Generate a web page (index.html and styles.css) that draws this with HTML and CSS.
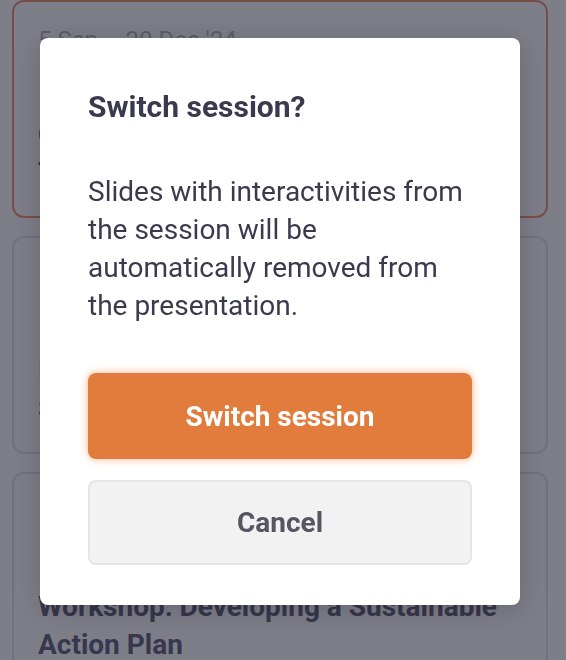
FILE: index.html
```html
<!DOCTYPE html>
<html lang="en">
<head>
    <meta charset="UTF-8">
    <meta name="viewport" content="width=device-width, initial-scale=1.0">
    <title>Sessions - Switch session</title>
    <link rel="stylesheet" href="styles.css">
</head>
<body>
    <!-- session list behind the dialog -->
    <main class="session-list">
        <article class="session-card session-card--active">
            <div class="session-date">5 Sep – 20 Dec '24</div>
            <h3 class="session-title">Climate Risk Assessment for Urban Transport Networks</h3>
        </article>
        <article class="session-card">
            <div class="session-date">12 Sep – 14 Nov '24</div>
            <h3 class="session-title">Introduction to Carbon Accounting for Small Businesses</h3>
        </article>
        <article class="session-card">
            <div class="session-date">10 Oct – 19 Dec '24</div>
            <h3 class="session-title">Workshop: Developing a Sustainable Action Plan</h3>
        </article>
    </main>

    <div class="overlay">
        <div class="dialog" role="dialog" aria-labelledby="dialog-title">
            <h2 class="dialog-title" id="dialog-title">Switch session?</h2>
            <p class="dialog-text">Slides with interactivities from the session will be automatically removed from the presentation.</p>
            <div class="dialog-actions">
                <button class="btn btn-primary">Switch session</button>
                <button class="btn btn-secondary">Cancel</button>
            </div>
        </div>
    </div>
</body>
</html>
```

FILE: styles.css
```css
body{
    margin: 0;
    background-color: #fff;
    font-family: Roboto, "Liberation Sans", Arial, sans-serif;
    color: #3a3a4e;
}
.session-list{
    display: flex;
    flex-direction: column;
    gap: 18px;
    padding: 0 18px 0 12px;
}
.session-card{
    height: 218px;
    box-sizing: border-box;
    padding: 22px 24px;
    border: 2px solid #e2e2ea;
    border-radius: 12px;
    background-color: #fff;
    overflow: hidden;
}
.session-card--active{
    border-color: #ec9a6c;
}
.session-date{
    font-size: 24px;
    line-height: 32px;
    color: #b4b4c0;
    margin-bottom: 60px;
}
.session-title{
    margin: 0;
    font-size: 28px;
    line-height: 38px;
    font-weight: 700;
    color: #62627a;
}
.overlay{
    position: fixed;
    inset: 0;
    background-color: rgba(20, 20, 40, 0.55);
    display: flex;
    align-items: flex-start;
    padding: 38px 0 0 40px;
}
.dialog{
    width: 480px;
    box-sizing: border-box;
    padding: 50px 48px 40px;
    background-color: #fff;
    border-radius: 8px;
    box-shadow: 0 4px 28px rgba(0, 0, 0, 0.2);
}
.dialog-title{
    margin: 0 0 47px;
    font-size: 30px;
    line-height: 38px;
    font-weight: 700;
    color: #3a3a4e;
}
.dialog-text{
    margin: 0 0 48px;
    font-size: 28px;
    line-height: 38px;
    color: #3a3a4e;
}
.dialog-actions{
    display: flex;
    flex-direction: column;
    gap: 21px;
}
.btn{
    height: 86px;
    border-radius: 8px;
    font-family: inherit;
    font-size: 28px;
    font-weight: 700;
    cursor: pointer;
}
.btn-primary{
    border: none;
    background-color: #e17c3c;
    color: #fff;
    box-shadow: 0 0 8px rgba(245, 130, 60, 0.6);
}
.btn-secondary{
    height: 85px;
    border: 2px solid #e5e5e8;
    background-color: #f2f2f2;
    color: #555563;
}
```
